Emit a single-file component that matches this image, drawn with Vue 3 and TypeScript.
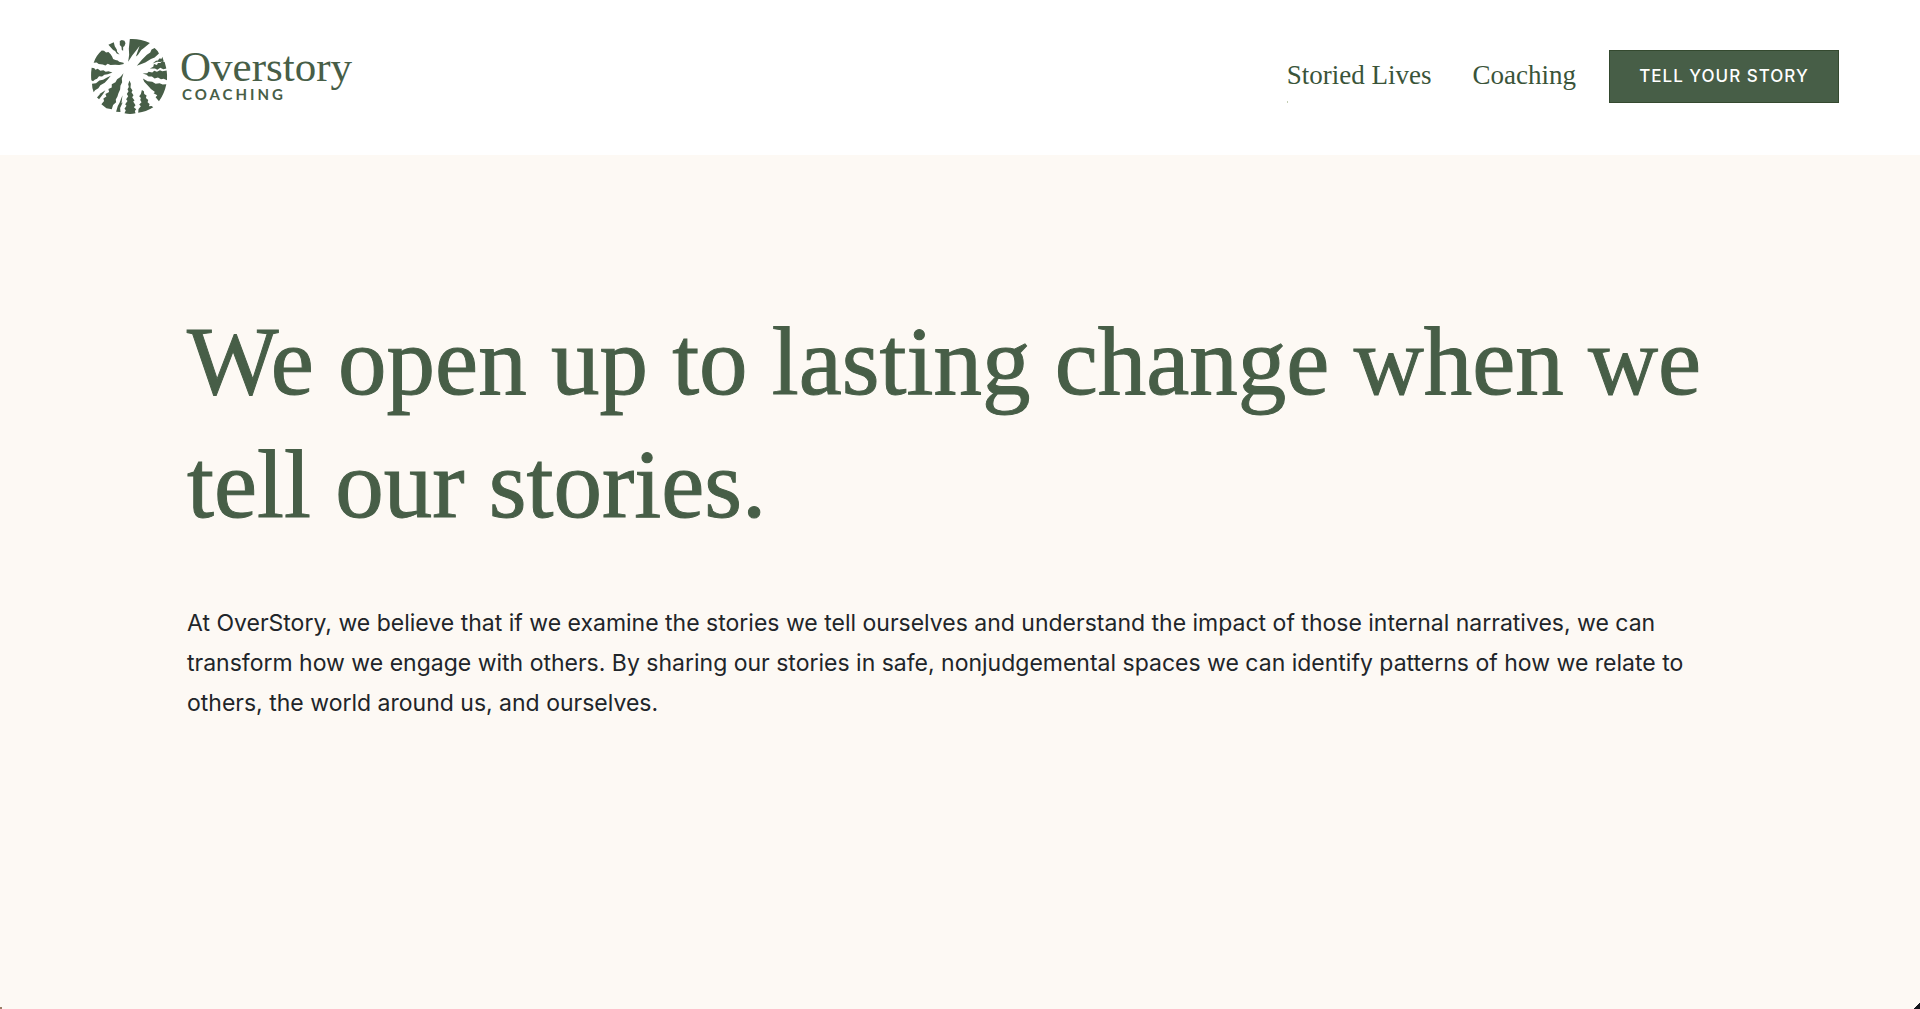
<script setup lang="ts">
interface NavLink {
  label: string
  href: string
  marked: boolean
}

const links: NavLink[] = [
  { label: 'Storied Lives', href: '#storied-lives', marked: true },
  { label: 'Coaching', href: '#coaching', marked: false },
]
</script>

<template>
  <div class="page">
    <header class="header">
      <a class="brand" href="#home">
        <svg class="mark" viewBox="32 28 230 230" aria-hidden="true">
          <path d="M148 31 Q178 29 208 43 L190 58 182 64 172 79 166 83 177 52 168 64 155 80 143 99 146 78 145 60Z" />
          <path d="M118 37 L124 34 132 36 135 44 132 52 128 55 128 66 124 64 123 54 118 49Z" />
          <path d="M84 48 L100 41 103 53 109 62 110 69 117 77 109 74 104 67 98 64Z" />
          <path d="M64 65 L71 66 77 71 84 70 90 76 95 83 98 91 105 94 112 95 116 99 129 102 130 106 116 109 104 108 90 109 82 105 75 110 67 107 55 106 49 101 40 102Q46 81 64 65Z" />
          <path d="M34 117 L42 118 45 123 52 120 60 126 69 124 76 129 84 127 96 131 82 136 72 138 65 143 56 142 50 150 44 152 38 157 33 154Q31 136 34 117Z" />
          <path d="M35 165 L47 163 57 155 68 153 80 146 91 141 82 152 73 162 60 169 54 178 44 184 40 190Q35 179 35 165Z" />
          <path d="M50 206 L61 193 75 184 68 195 63 202 56 211Z" />
          <path d="M129 133 L124 150 125 160 120 171 119 182 114 193 111 203 106 212 107 220 98 228 94 241 78 238 63 226 71 216 69 209 78 203 75 195 86 189 84 180 94 176 94 166 105 160 110 151 119 145Z" />
          <path d="M126 199 L123 224 127 220 119 237 120 249 107 248 112 231 117 222Z" />
          <path d="M147 155 L151 165 150 176 156 185 153 190 159 199 155 205 162 215 158 218 165 229 160 235 167 241 163 246 165 253 Q149 257 132 253 L136 244 132 239 138 230 134 226 141 216 137 211 143 202 139 195 144 187 141 181 145 174 143 166Z" />
          <path d="M184 183 L190 187 191 195 198 200 196 207 203 213 201 220 207 225 205 232 213 231 218 235 Q196 249 173 251 L174 240 181 232 176 227 183 220 179 213 181 207 176 202 181 195Z" />
          <path d="M187 149 L201 157 215 159 225 165 237 163 246 167 257 166 Q251 195 235 217 L225 205 230 199 219 193 223 189 211 180 201 169 191 159Z" />
          <path d="M186 134 L200 133 204 129 215 131 221 126 229 129 238 124 245 127 258 125 Q260 140 259 154 L249 150 241 151 232 146 222 149 214 143 204 143 198 138Z" />
          <path d="M208 119 L218 114 220 106 229 109 232 103 239 103 245 97 252 100 257 119 248 121 239 117 230 123 223 119Z" />
          <path d="M216 104 L226 96 232 95 236 89 243 90 245 84 249 97 239 100 230 99Z" />
          <path d="M169 111 L184 93 199 78 209 71 213 62 222 58 231 67 235 74 222 86 211 91 194 101Z" />
        </svg>
        <span class="wordmark">
          <span class="name">Overstory</span>
          <span class="sub">COACHING</span>
        </span>
      </a>
      <nav class="nav" aria-label="Main">
        <a
          v-for="link in links"
          :key="link.label"
          class="link"
          :class="{ marked: link.marked }"
          :href="link.href"
        >{{ link.label }}</a>
        <button class="cta" type="button">TELL YOUR STORY</button>
      </nav>
    </header>
    <main class="hero">
      <h1 class="title">We open up to lasting change when we tell our stories.</h1>
      <p class="lead">
        At OverStory, we believe that if we examine the stories we tell ourselves and understand the
        impact of those internal narratives, we can transform how we engage with others. By sharing
        our stories in safe, nonjudgemental spaces we can identify patterns of how we relate to
        others, the world around us, and ourselves.
      </p>
    </main>
    <span class="corner left" aria-hidden="true"></span>
    <span class="corner right" aria-hidden="true"></span>
  </div>
</template>

<style>
body {
  background: #fdf9f4;
}
</style>

<style scoped>
.page {
  position: relative;
  display: flex;
  flex-direction: column;
  min-height: 100vh;
  overflow: hidden;
  background: #fdf9f4;
  color: #212529;
  font-family: Inter, "Liberation Sans", sans-serif;
}

.header {
  display: flex;
  align-items: center;
  justify-content: space-between;
  box-sizing: border-box;
  min-height: 155px;
  padding: 0 81px 3px 91px;
  background: #fff;
}

.brand {
  display: flex;
  align-items: center;
  gap: 12px;
  color: #475e47;
  text-decoration: none;
}

.mark {
  width: 77px;
  height: 77px;
  fill: currentColor;
}

.wordmark {
  display: flex;
  flex-direction: column;
}

.name {
  font-family: "Liberation Serif", serif;
  font-size: 43px;
  line-height: 36px;
}

.sub {
  padding-left: 2px;
  font-family: Lato, sans-serif;
  font-size: 15px;
  font-weight: 700;
  line-height: 18px;
  letter-spacing: 3px;
}

.nav {
  display: flex;
  align-items: center;
  gap: 33px;
}

.link {
  position: relative;
  padding-bottom: 2px;
  color: #3a5439;
  font-family: "Liberation Serif", serif;
  font-size: 27px;
  line-height: 36px;
  text-decoration: none;
}

.link + .link {
  margin-left: 8px;
}

.marked::after {
  content: "";
  position: absolute;
  left: 0;
  top: 44px;
  width: 1px;
  height: 2px;
  background: #c5cfb4;
}

.cta {
  min-width: 230px;
  height: 53px;
  padding: 0 26px;
  border: 1px solid #34492f;
  background: #475e47;
  color: #fff;
  font-family: inherit;
  font-size: 17px;
  font-weight: 500;
  letter-spacing: 1px;
}

.hero {
  padding: 145px 187px 0;
}

.title {
  margin: 0;
  color: #475e47;
  font-family: "Liberation Serif", serif;
  font-size: 97px;
  font-weight: 400;
  line-height: 123px;
  -webkit-text-stroke: 1px currentColor;
}

.lead {
  margin: 57px 0 0;
  font-size: 23px;
  line-height: 40px;
}

.corner {
  position: absolute;
  bottom: 0;
}

.left {
  left: 0;
  width: 2px;
  height: 2px;
  background: #9a7d66;
}

.right {
  right: 0;
  width: 6px;
  height: 6px;
  background: linear-gradient(135deg, transparent 50%, #14161c 50%);
}
</style>
